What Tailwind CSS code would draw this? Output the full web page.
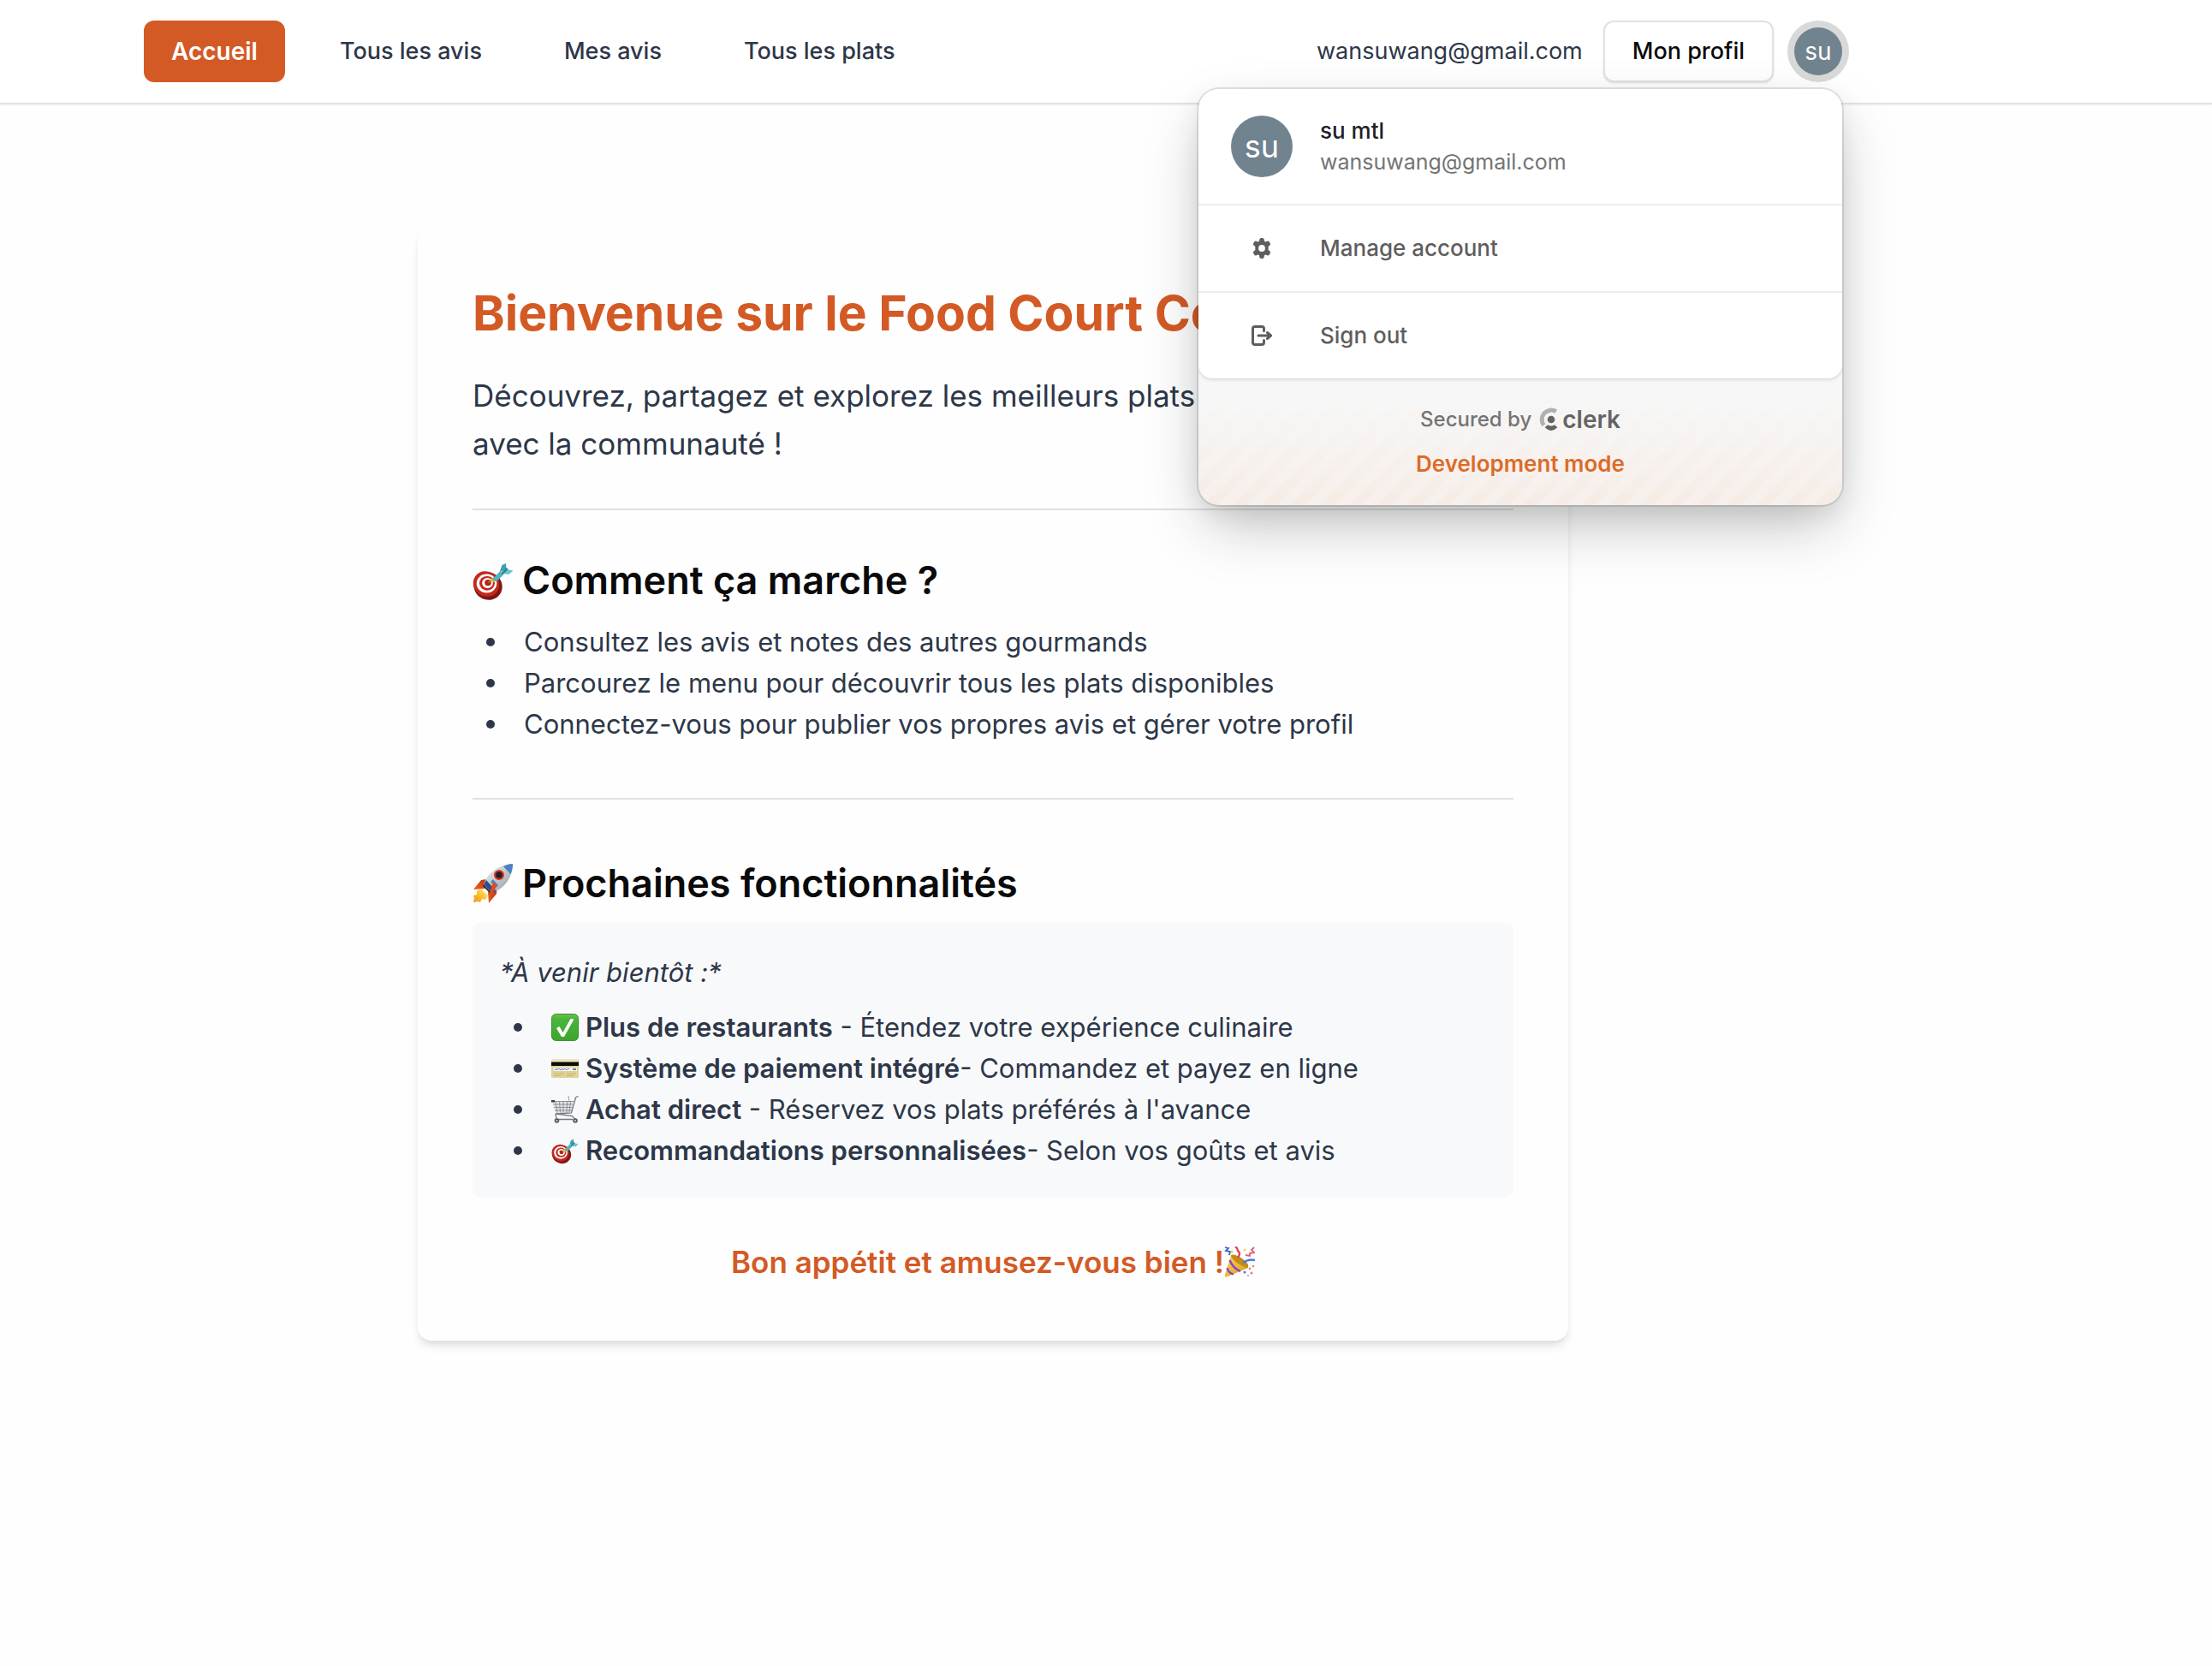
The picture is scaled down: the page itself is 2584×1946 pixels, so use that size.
<!DOCTYPE html>
<html lang="fr">
<head>
<meta charset="utf-8">
<meta name="viewport" content="width=device-width, initial-scale=1">
<title>Food Court Connect</title>
<script src="https://cdn.jsdelivr.net/npm/@tailwindcss/browser@4"></script>
</head>
<body class="min-h-screen bg-[#fefefe] font-['Inter','Liberation_Sans',sans-serif] text-[31px] leading-[48px] text-[#2d3748]">

<svg class="absolute size-0" aria-hidden="true">
  <defs>
    <linearGradient id="steel" x1="0" y1="0" x2="1" y2="1"><stop offset="0" stop-color="#f4f6f8"/><stop offset=".5" stop-color="#c3c9cf"/><stop offset="1" stop-color="#8b929b"/></linearGradient>
    <linearGradient id="flame" x1="1" y1="0" x2="0" y2="1"><stop offset="0" stop-color="#fff3a0"/><stop offset=".5" stop-color="#fbc12c"/><stop offset="1" stop-color="#f0902a"/></linearGradient>
    <linearGradient id="fin" x1="1" y1="0" x2="0" y2="1"><stop offset="0" stop-color="#a82a14"/><stop offset="1" stop-color="#f2601f"/></linearGradient>
    <linearGradient id="green" x1="0" y1="0" x2="0" y2="1"><stop offset="0" stop-color="#6cc04f"/><stop offset=".2" stop-color="#47b53a"/><stop offset="1" stop-color="#3ea52f"/></linearGradient>
    <linearGradient id="gold" x1="0" y1="0" x2="1" y2="1"><stop offset="0" stop-color="#f9d75a"/><stop offset="1" stop-color="#d99a1e"/></linearGradient>
    <symbol id="target" viewBox="0 0 48 48">
      <ellipse cx="18" cy="30.500" rx="17" ry="16" fill="#7e1712" transform="rotate(35 18 30.500)"/>
      <ellipse cx="16" cy="28" rx="15.500" ry="14.500" fill="#c4281f" transform="rotate(35 16 28)"/>
      <ellipse cx="16.500" cy="27.500" rx="11.800" ry="11" fill="#fff"/>
      <ellipse cx="17" cy="27.300" rx="9" ry="8.400" fill="#c4281f"/>
      <ellipse cx="17.500" cy="27" rx="6.400" ry="6" fill="#fff"/>
      <ellipse cx="18" cy="26.700" rx="3.800" ry="3.600" fill="#b3221b"/>
      <path d="M18.500 26.500L25 21" stroke="#b58a1b" stroke-width="1.500"/>
      <path d="M22 21l5 4.500-3 .8-2.800-2.600z" fill="#e6b52c"/>
      <path d="M24 21.500l8-8 4.500 3.500-7 7-4 1z" fill="#4fb3c2"/>
      <path d="M31.500 14.500l3-8.500 4.500-2 .5 7z" fill="#3f9fb0"/>
      <path d="M34 16l6-5 7.500 1.500-5 4.500z" fill="#67c6d1"/>
      <path d="M33 15.500l7-6.500 1.500 2-6 6z" fill="#2d8494"/>
    </symbol>
    <symbol id="rocket" viewBox="0 0 48 48">
      <path d="M22 18l-12 2L1 31l13-1z" fill="url(#fin)"/>
      <path d="M29 25l-1 11-9 11-1-13z" fill="url(#fin)"/>
      <path d="M10 30l8 8-3 5-4-1-2 4-3-1-5 1 1-5-1-3 4-1 0-4z" fill="url(#flame)"/>
      <path d="M12 27l9 9 2-1-10-10z" fill="#2b2f38"/>
      <path d="M13 25C17 12 30 2 47 1c0 16-10 29-24 34z" fill="url(#steel)"/>
      <path d="M36 4c4-2 7-3 11-3 0 5-1 8-2.500 12z" fill="#4f7fc0"/>
      <path d="M13 25l10 10 5-2-12-13z" fill="#34507e"/>
      <path d="M24 19l6 7-3 3-6-7z" fill="#5b83bd"/>
      <circle cx="31" cy="14" r="6" fill="#d6331c"/>
      <circle cx="31" cy="14" r="3.800" fill="#1c1f27"/>
      <path d="M24 23l5 3-8 13-1-4z" fill="#e34a1e"/>
    </symbol>
    <symbol id="check" viewBox="0 0 32 32">
      <rect x=".5" y=".5" width="31" height="31" rx="5" fill="url(#green)" stroke="#3b9330"/>
      <path d="M6 17l3.500-2 4 7L22.500 6l4 .5L15 27h-3z" fill="#fff"/>
    </symbol>
    <symbol id="card" viewBox="0 0 32 32">
      <rect x="0" y="5" width="32" height="22" rx="1.500" fill="#e0d396"/>
      <rect x="0" y="5" width="32" height="3" rx="1.500" fill="#efe6b8"/>
      <rect y="8.500" width="32" height="4.500" fill="#0d0d0b"/>
      <rect x="2.500" y="15" width="27.500" height="4" fill="#f2f3f6"/>
      <path d="M4 18l2-2 1 2 2-2 2 2 2-2 1 2 2-2 2 2 2-2 1 1" stroke="#6c86c6" stroke-width="1" fill="none"/>
      <path d="M25 17h4" stroke="#555" stroke-width="1.500"/>
      <path d="M3 22h12M3 24.500h8M18 22h11M18 24.500h8" stroke="#c4b673" stroke-width="1"/>
    </symbol>
    <symbol id="cart" viewBox="0 0 32 32">
      <path d="M1 6l25 0-3 13-18 1z" fill="#e3e5e8"/>
      <path d="M1 6.500h25M2 10h23M3 13.500h21.500M4 17h20M5 6.500l2 13M9.500 6.500l1 13M14 6.500v13M18.500 6.500l-.5 13M22.500 6.500l-1.500 12.500" stroke="#85898f" stroke-width=".9" fill="none"/>
      <path d="M31.500 0.500l-3 1.500-5 18-18 1 19 2.500 3 3.500M5 20.500l1 7h19" stroke="#74787e" stroke-width="1.300" fill="none"/>
      <path d="M20 0l1 6" stroke="#9da1a6" stroke-width="1"/>
      <rect x="0" y="5" width="4" height="2.500" fill="#2d4257"/>
      <circle cx="6.500" cy="29" r="2.800" fill="#55585d"/><circle cx="28" cy="29" r="2.800" fill="#55585d"/>
      <circle cx="6.500" cy="29" r="1" fill="#ddd"/><circle cx="28" cy="29" r="1" fill="#ddd"/>
    </symbol>
    <symbol id="party" viewBox="0 0 36 36">
      <path d="M8 10L28 25 3 35.500Q0 36 1 33z" fill="url(#gold)"/>
      <path d="M8 10Q12 8 21 14T28 25Q22 24 15 19T8 10z" fill="#c58a17"/>
      <path d="M6.500 16Q10 25 19 29M3.500 25Q5 31 11 32.500" stroke="#8b41c9" stroke-width="2.300" fill="none"/>
      <path d="M22 19q7-5 14-3" stroke="#4b78df" stroke-width="2.500" fill="none"/>
      <path d="M16 13q4-5 0-8 0-3-3-5" stroke="#dc4560" stroke-width="2.400" fill="none"/>
      <path d="M1 1l4 1-3 3 5 1-1 4" stroke="#3e67cf" stroke-width="1.800" fill="none"/>
      <path d="M35 1l-3 3 3 3-5 1 0 3-5-1" stroke="#dd5e77" stroke-width="1.800" fill="none"/>
      <circle cx="9" cy="6" r="1.500" fill="#f0cb38"/><circle cx="24" cy="4" r="1.300" fill="#f0cb38"/>
      <circle cx="30" cy="26" r="1.400" fill="#e59a4a"/><circle cx="34" cy="23" r="1.300" fill="#dd8a5b"/>
      <circle cx="24" cy="30" r="1.500" fill="#4b78df"/><circle cx="32" cy="31" r="1.600" fill="#e0869d"/>
      <circle cx="28" cy="34" r="1" fill="#b889dd"/>
    </symbol>
  </defs>
</svg>

<header class="border-b-2 border-[#e2e3e8] bg-white shadow-xs">
  <div class="flex h-[120px] max-w-[2320px] items-center justify-between pr-[160px] pl-[168px] text-[27px] leading-10">
    <nav class="flex items-center gap-8 font-medium">
      <a href="#" class="flex h-[72px] items-center rounded-xl bg-[#d35a25] px-8 text-[28px] font-semibold text-white">Accueil</a>
      <a href="#" class="flex h-[72px] items-center px-8">Tous les avis</a>
      <a href="#" class="flex h-[72px] items-center px-8">Mes avis</a>
      <a href="#" class="flex h-[72px] items-center px-8">Tous les plats</a>
    </nav>
    <div class="flex items-center">
      <span class="mr-6">wansuwang@gmail.com</span>
      <button type="button" class="mr-4 h-[72px] rounded-xl border-2 border-[#e2e2e2] bg-white px-8 font-medium text-[#0a0a0a] shadow-sm">Mon profil</button>
      <div class="relative">
        <button type="button" aria-label="Ouvrir le menu du compte" class="flex size-[72px] items-center justify-center rounded-full bg-[#d9d9d9]">
          <span class="flex size-[56px] items-center justify-center rounded-full bg-[#71838f] text-[28px] text-white">su</span>
        </button>

        <!-- account menu -->
        <div class="absolute top-[80px] right-2 z-10 w-[752px] overflow-hidden rounded-3xl bg-[#f7f7f7] text-[26px] leading-9 text-[#5e5e5e] shadow-[0_0_0_2px_rgba(0,0,0,0.1),0_10px_30px_0_rgba(0,0,0,0.08),0_30px_70px_-10px_rgba(25,28,33,0.28)]">
          <div class="relative rounded-b-2xl bg-white shadow-[0_0_2px_0_rgba(0,0,0,0.12),0_2px_4px_0_rgba(0,0,0,0.1)]">
            <div class="flex h-[136px] items-center gap-8 border-b-2 border-[#ededed] px-[38px]">
              <span class="flex size-[72px] items-center justify-center rounded-full bg-[#71838f] text-[36px] text-white">su</span>
              <div>
                <p class="font-medium text-[#212126]">su mtl</p>
                <p class="text-[25px] text-[#747474]">wansuwang@gmail.com</p>
              </div>
            </div>
            <button type="button" class="flex h-[102px] w-full items-center gap-8 border-b-2 border-[#ededed] px-[38px] text-left font-medium">
              <span class="flex w-[72px] justify-center">
                <svg class="size-6" viewBox="0 0 24 24" fill="#5e5e5e" fill-rule="evenodd"><path d="M9.300 1.800Q9.600 0 11 0h2q1.400 0 1.700 1.800l.3 2 1.300.8 2-.8q1.700-.6 2.500.7l1 1.700q.8 1.300-.6 2.500l-1.600 1.300q.2 2 0 4l1.600 1.300q1.400 1.200.6 2.500l-1 1.700q-.8 1.300-2.500.7l-2-.8-1.300.8-.3 2Q14.400 24 13 24h-2q-1.400 0-1.700-1.800l-.3-2-1.300-.8-2 .8q-1.700.6-2.500-.7l-1-1.700q-.8-1.300.6-2.500L4.400 14q-.2-2 0-4L2.800 8.700Q1.400 7.500 2.200 6.200l1-1.700q.8-1.300 2.500-.7l2 .8L9 3.800zM12 8.100a3.900 3.900 0 1 0 0 7.800 3.900 3.900 0 0 0 0-7.800z"/></svg>
              </span>
              Manage account
            </button>
            <button type="button" class="flex h-[100px] w-full items-center gap-8 px-[38px] text-left font-medium">
              <span class="flex w-[72px] justify-center">
                <svg class="size-6" viewBox="0 0 24 24" fill="none" stroke="#5e5e5e" stroke-width="3" stroke-linecap="round" stroke-linejoin="round"><path d="M14.500 6.500V4Q14.500 1.500 12 1.500H4Q1.500 1.500 1.500 4v16q0 2.500 2.500 2.500h8q2.500 0 2.500-2.500v-2.500M8 12h14M18.500 8.500L22.500 12l-4 3.500"/></svg>
              </span>
              Sign out
            </button>
          </div>
          <div class="relative flex h-[148px] flex-col items-center justify-center gap-4">
            <div class="absolute inset-0 bg-[repeating-linear-gradient(-45deg,rgba(243,107,22,0.05)_0_12px,rgba(243,107,22,0.08)_12px_24px)] [mask-image:linear-gradient(transparent_15%,black)]"></div>
            <div class="relative flex items-center text-[24px] font-medium text-[#747474]">
              <span>Secured by</span>
              <a href="#" class="ml-2 flex items-center gap-1 text-[28px] font-semibold text-[#646464]">
                <svg class="h-7 w-6" viewBox="52 33 72 84" aria-hidden="true">
                  <path d="M114.500 47A33 33 0 0 0 71 95" fill="none" stroke="#b0b0b0" stroke-width="15"/>
                  <circle cx="97" cy="75" r="13" fill="#646464"/>
                  <path d="M75 103l10-9q12 7 24 0l10 9q-22 22-44 0z" fill="#646464"/>
                </svg>
                <span>clerk</span>
              </a>
            </div>
            <p class="relative font-semibold text-[#dc6b27]">Development mode</p>
          </div>
        </div>
      </div>
    </div>
  </div>
</header>

<main class="flex max-w-[2320px] justify-center pt-36">
  <article class="w-full max-w-[1344px] rounded-2xl bg-[#fefefe] p-16 shadow-[0_8px_12px_-2px_rgba(0,0,0,0.1),0_4px_8px_-4px_rgba(0,0,0,0.1)]">
    <h1 class="text-[57px] leading-[72px] font-bold whitespace-nowrap text-[#d35a25]">Bienvenue sur le Food Court Connect</h1>
    <p class="mt-8 text-[35px] leading-[56px]">Découvrez, partagez et explorez les meilleurs plats du food court<br>avec la communauté !</p>
    <hr class="mt-12 mb-[50px] border-t-2 border-[#e0e0e0]">

    <section>
      <h2 class="flex items-center gap-[10px] text-[45px] leading-[64px] font-semibold text-[#0a0a0a]"><svg class="size-12" role="img" aria-label="Cible"><use href="#target"/></svg>Comment ça marche ?</h2>
      <ul class="mt-4">
        <li class="flex items-center gap-[34px] pl-4 before:size-[10px] before:rounded-full before:bg-[#2d3748]">Consultez les avis et notes des autres gourmands</li>
        <li class="flex items-center gap-[34px] pl-4 before:size-[10px] before:rounded-full before:bg-[#2d3748]">Parcourez le menu pour découvrir tous les plats disponibles</li>
        <li class="flex items-center gap-[34px] pl-4 before:size-[10px] before:rounded-full before:bg-[#2d3748]">Connectez-vous pour publier vos propres avis et gérer votre profil</li>
      </ul>
    </section>
    <hr class="mt-[62px] mb-[66px] border-t-2 border-[#e0e0e0]">

    <section>
      <h2 class="flex items-center gap-[10px] text-[45px] leading-[64px] font-semibold text-[#0a0a0a]"><svg class="size-12" role="img" aria-label="Fusée"><use href="#rocket"/></svg>Prochaines fonctionnalités</h2>
      <div class="mt-[14px] rounded-lg bg-[#f8f9fb] px-8 pt-[34px] pb-[30px]">
        <p class="italic">*À venir bientôt :*</p>
        <ul class="mt-4">
          <li class="flex items-center pl-4 before:mr-[34px] before:size-[10px] before:rounded-full before:bg-[#2d3748]"><svg class="mr-2 size-8" role="img" aria-label="Coche"><use href="#check"/></svg><span><strong class="font-semibold">Plus de restaurants</strong> - Étendez votre expérience culinaire</span></li>
          <li class="flex items-center pl-4 before:mr-[34px] before:size-[10px] before:rounded-full before:bg-[#2d3748]"><svg class="mr-2 size-8" role="img" aria-label="Carte bancaire"><use href="#card"/></svg><span><strong class="font-semibold">Système de paiement intégré</strong>- Commandez et payez en ligne</span></li>
          <li class="flex items-center pl-4 before:mr-[34px] before:size-[10px] before:rounded-full before:bg-[#2d3748]"><svg class="mr-2 size-8" role="img" aria-label="Chariot"><use href="#cart"/></svg><span><strong class="font-semibold">Achat direct</strong> - Réservez vos plats préférés à l'avance</span></li>
          <li class="flex items-center pl-4 before:mr-[34px] before:size-[10px] before:rounded-full before:bg-[#2d3748]"><svg class="mr-2 size-8" role="img" aria-label="Cible"><use href="#target"/></svg><span><strong class="font-semibold">Recommandations personnalisées</strong>- Selon vos goûts et avis</span></li>
        </ul>
      </div>
    </section>
    <p class="mt-12 flex items-center justify-center text-[35px] leading-[56px] font-semibold text-[#d35a25]">Bon appétit et amusez-vous bien !<svg class="size-9" role="img" aria-label="Fête"><use href="#party"/></svg></p>
  </article>
</main>
</body>
</html>
